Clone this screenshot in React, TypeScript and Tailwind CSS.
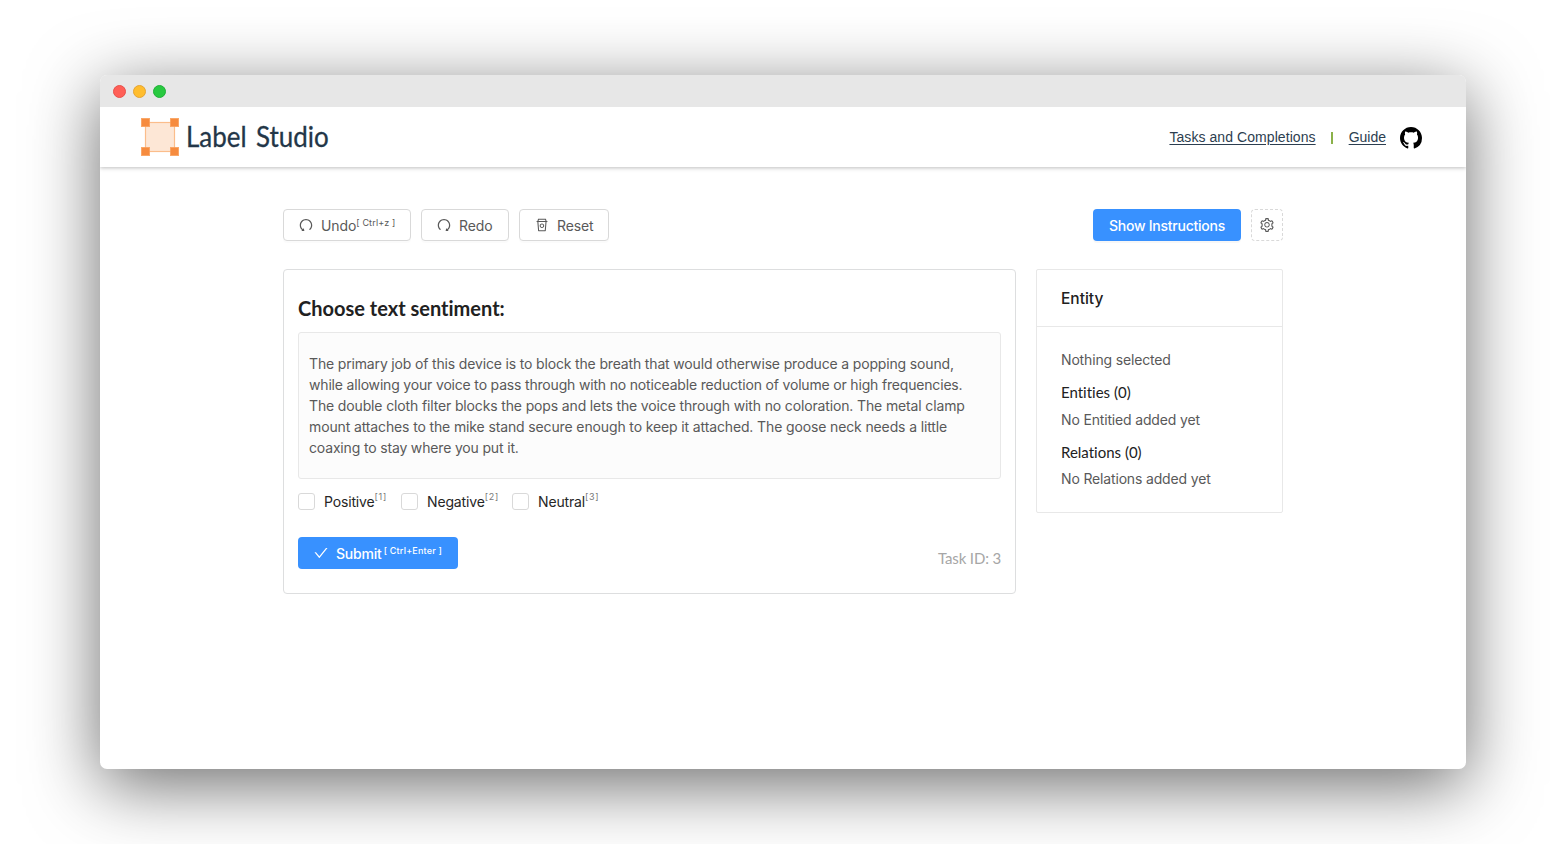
import { ReactNode } from "react";
import { AiOutlineUndo, AiOutlineRedo, AiOutlineRest, AiOutlineSetting, AiOutlineCheck } from "react-icons/ai";

function Logo() {
  return (
    <svg width="38" height="38" viewBox="0 0 38 38" className="block">
      <rect x="4.5" y="4.5" width="29" height="29" fill="#fde7d6" stroke="#fbbd8b" strokeWidth="1.2" />
      <g fill="#f68b3e" stroke="#fba35f" strokeWidth="0.6">
        <rect x="0.3" y="0.3" width="8.4" height="8.4" />
        <rect x="29.3" y="0.3" width="8.4" height="8.4" />
        <rect x="0.3" y="29.3" width="8.4" height="8.4" />
        <rect x="29.3" y="29.3" width="8.4" height="8.4" />
      </g>
    </svg>
  );
}

function GitHubMark() {
  return (
    <svg width="22" height="22" viewBox="0 0 16 16" className="block" fill="#000">
      <path d="M8 0C3.58 0 0 3.58 0 8c0 3.54 2.29 6.53 5.47 7.59.4.07.55-.17.55-.38 0-.19-.01-.82-.01-1.49-2.01.37-2.53-.49-2.69-.94-.09-.23-.48-.94-.82-1.13-.28-.15-.68-.52-.01-.53.63-.01 1.08.58 1.23.82.72 1.21 1.87.87 2.33.66.07-.52.28-.87.51-1.07-1.78-.2-3.64-.89-3.64-3.95 0-.87.31-1.59.82-2.15-.08-.2-.36-1.02.08-2.12 0 0 .67-.21 2.2.82.64-.18 1.32-.27 2-.27s1.36.09 2 .27c1.53-1.04 2.2-.82 2.2-.82.44 1.1.16 1.92.08 2.12.51.56.82 1.27.82 2.15 0 3.07-1.87 3.75-3.65 3.95.29.25.54.73.54 1.48 0 1.07-.01 1.93-.01 2.2 0 .21.15.46.55.38A8.01 8.01 0 0 0 16 8c0-4.42-3.58-8-8-8z" />
    </svg>
  );
}

function ToolButton({ width, icon, children }: { width: string; icon: ReactNode; children: ReactNode }) {
  return (
    <button className={`flex h-8 items-center rounded border border-[#d9d9d9] bg-white pl-[14px] text-sm text-[#595959] shadow-[0_2px_0_rgba(0,0,0,0.015)] ${width}`}>
      {icon}
      <span className="mt-[2px] ml-[7px] flex tracking-[-0.1px] whitespace-nowrap">{children}</span>
    </button>
  );
}

function Choice({ label, hotkey, width }: { label: string; hotkey: string; width: string }) {
  return (
    <label className={`flex items-center ${width}`}>
      <span className="size-[17px] shrink-0 rounded-[3px] border border-[#d9d9d9] bg-white" />
      <span className="ml-[9px] text-sm leading-[21px] tracking-[-0.15px] text-[#262626]">{label}</span>
      <span className="mb-[9px] text-[9px] leading-3 tracking-[0.7px] text-[#777]">[{hotkey}]</span>
    </label>
  );
}

export default function App() {
  return (
    <div className="h-[844px] w-[1566px] overflow-hidden bg-white px-[100px] pt-[75px] font-['Inter',sans-serif]">
      <div className="h-[694px] w-[1366px] overflow-hidden rounded-[7px] bg-white shadow-[0_16px_70px_rgba(0,0,0,0.58)]">
        <div className="relative z-10 flex h-8 items-center gap-[7px] bg-[#e7e7e7] pt-[1px] pl-[13.4px]">
          <span className="size-[13px] rounded-full border border-[#e8504a] bg-[#ff5f57]" />
          <span className="size-[13px] rounded-full border border-[#e5a432] bg-[#ffbd2e]" />
          <span className="size-[13px] rounded-full border border-[#1fb038] bg-[#28c940]" />
        </div>
        <header className="flex h-[60px] items-center bg-white pl-[41px] shadow-[0_1px_4px_rgba(0,0,0,0.26)]">
          <Logo />
          <div className="mb-[2px] ml-[7px] w-[150px]">
            <span className="inline-block origin-left scale-x-[0.895] text-[29px] leading-[36px] whitespace-nowrap text-[#233648] [-webkit-text-stroke:0.3px_#233648] [word-spacing:3px] font-['Lato',sans-serif]">Label Studio</span>
          </div>
          <nav className="mr-[44px] ml-auto flex items-center font-['Liberation_Sans',sans-serif] text-sm text-[#2c3e50]">
            <a className="tracking-[0.07px] underline underline-offset-2">Tasks and Completions</a>
            <span className="mt-[2px] mr-4 ml-[15px] h-3 w-[2px] bg-[#8bb14a]" />
            <a className="underline underline-offset-2">Guide</a>
            <span className="mt-[2px] ml-[14px]"><GitHubMark /></span>
          </nav>
        </header>
        <main className="ml-[183px] w-[1000px] pt-[42px]">
          <div className="flex items-center gap-[10px]">
            <ToolButton width="w-[128px]" icon={<AiOutlineUndo size={16} />}>
              Undo<span className="mt-px text-[9px] leading-3 tracking-[0.15px]">[ Ctrl+z ]</span>
            </ToolButton>
            <ToolButton width="w-[88px]" icon={<AiOutlineRedo size={16} />}>Redo</ToolButton>
            <ToolButton width="w-[90px]" icon={<AiOutlineRest size={16} />}>Reset</ToolButton>
            <button className="ml-auto h-8 w-[148px] rounded bg-[#3891ff] pt-[2px] text-sm font-medium tracking-[-0.25px] text-white shadow-[0_2px_0_rgba(0,0,0,0.03)]">Show Instructions</button>
            <button className="flex size-8 items-center justify-center rounded border border-dashed border-[#d9d9d9] text-[#595959]">
              <AiOutlineSetting size={16} />
            </button>
          </div>
          <div className="mt-7 flex items-start gap-5">
            <section className="h-[325px] w-[733px] rounded border border-[#dddedf] px-[14px] pt-6">
              <h3 className="h-7 text-[20px] leading-7 font-bold text-[#212121] [font-variant-ligatures:none] font-['Lato',sans-serif]">Choose text sentiment:</h3>
              <div className="mt-[10px] h-[147px] rounded-[3px] border border-[#e8e8e8] bg-[#fcfcfc] px-[10px] pt-5 text-sm leading-[21px] whitespace-nowrap text-[#595959]">
                <p className="tracking-[-0.16px]">The primary job of this device is to block the breath that would otherwise produce a popping sound,</p>
                <p className="tracking-[-0.178px]">while allowing your voice to pass through with no noticeable reduction of volume or high frequencies.</p>
                <p className="tracking-[-0.142px]">The double cloth filter blocks the pops and lets the voice through with no coloration. The metal clamp</p>
                <p className="tracking-[-0.131px]">mount attaches to the mike stand secure enough to keep it attached. The goose neck needs a little</p>
                <p className="tracking-[-0.165px]">coaxing to stay where you put it.</p>
              </div>
              <div className="mt-3 flex">
                <Choice label="Positive" hotkey="1" width="w-[103px]" />
                <Choice label="Negative" hotkey="2" width="w-[111px]" />
                <Choice label="Neutral" hotkey="3" width="w-[100px]" />
              </div>
              <div className="mt-[25px] flex justify-between">
                <button className="flex h-8 w-40 items-center rounded bg-[#3891ff] pl-[15px] text-sm font-medium text-white">
                  <AiOutlineCheck size={16} />
                  <span className="mt-[2px] ml-[7px] tracking-[-0.2px]">Submit</span>
                  <span className="mb-1 ml-[2px] text-[9px] leading-3 tracking-[0.2px]">[ Ctrl+Enter ]</span>
                </button>
                <span className="mt-[10px] text-[15px] leading-[22px] tracking-[-0.15px] text-[#a6a6a6] font-['Lato',sans-serif]">Task ID: 3</span>
              </div>
            </section>
            <aside className="h-[244px] w-[247px] rounded-[2px] border border-[#e8e8e8] text-sm text-[#595959]">
              <h4 className="h-[57px] border-b border-[#e8e8e8] pl-6 text-[15.5px] leading-[57px] font-medium text-[#212121]">Entity</h4>
              <div className="pt-[22px] pl-6 leading-[22px] tracking-[-0.16px]">
                <p>Nothing selected</p>
                <h5 className="mt-[10px] text-[15px] tracking-normal text-[#212121] [font-variant-ligatures:none] font-['Lato',sans-serif]">Entities (0)</h5>
                <p className="mt-[6px]">No Entitied added yet</p>
                <h5 className="mt-[10px] text-[15px] tracking-normal text-[#212121] [font-variant-ligatures:none] font-['Lato',sans-serif]">Relations (0)</h5>
                <p className="mt-[5px]">No Relations added yet</p>
              </div>
            </aside>
          </div>
        </main>
      </div>
    </div>
  );
}
